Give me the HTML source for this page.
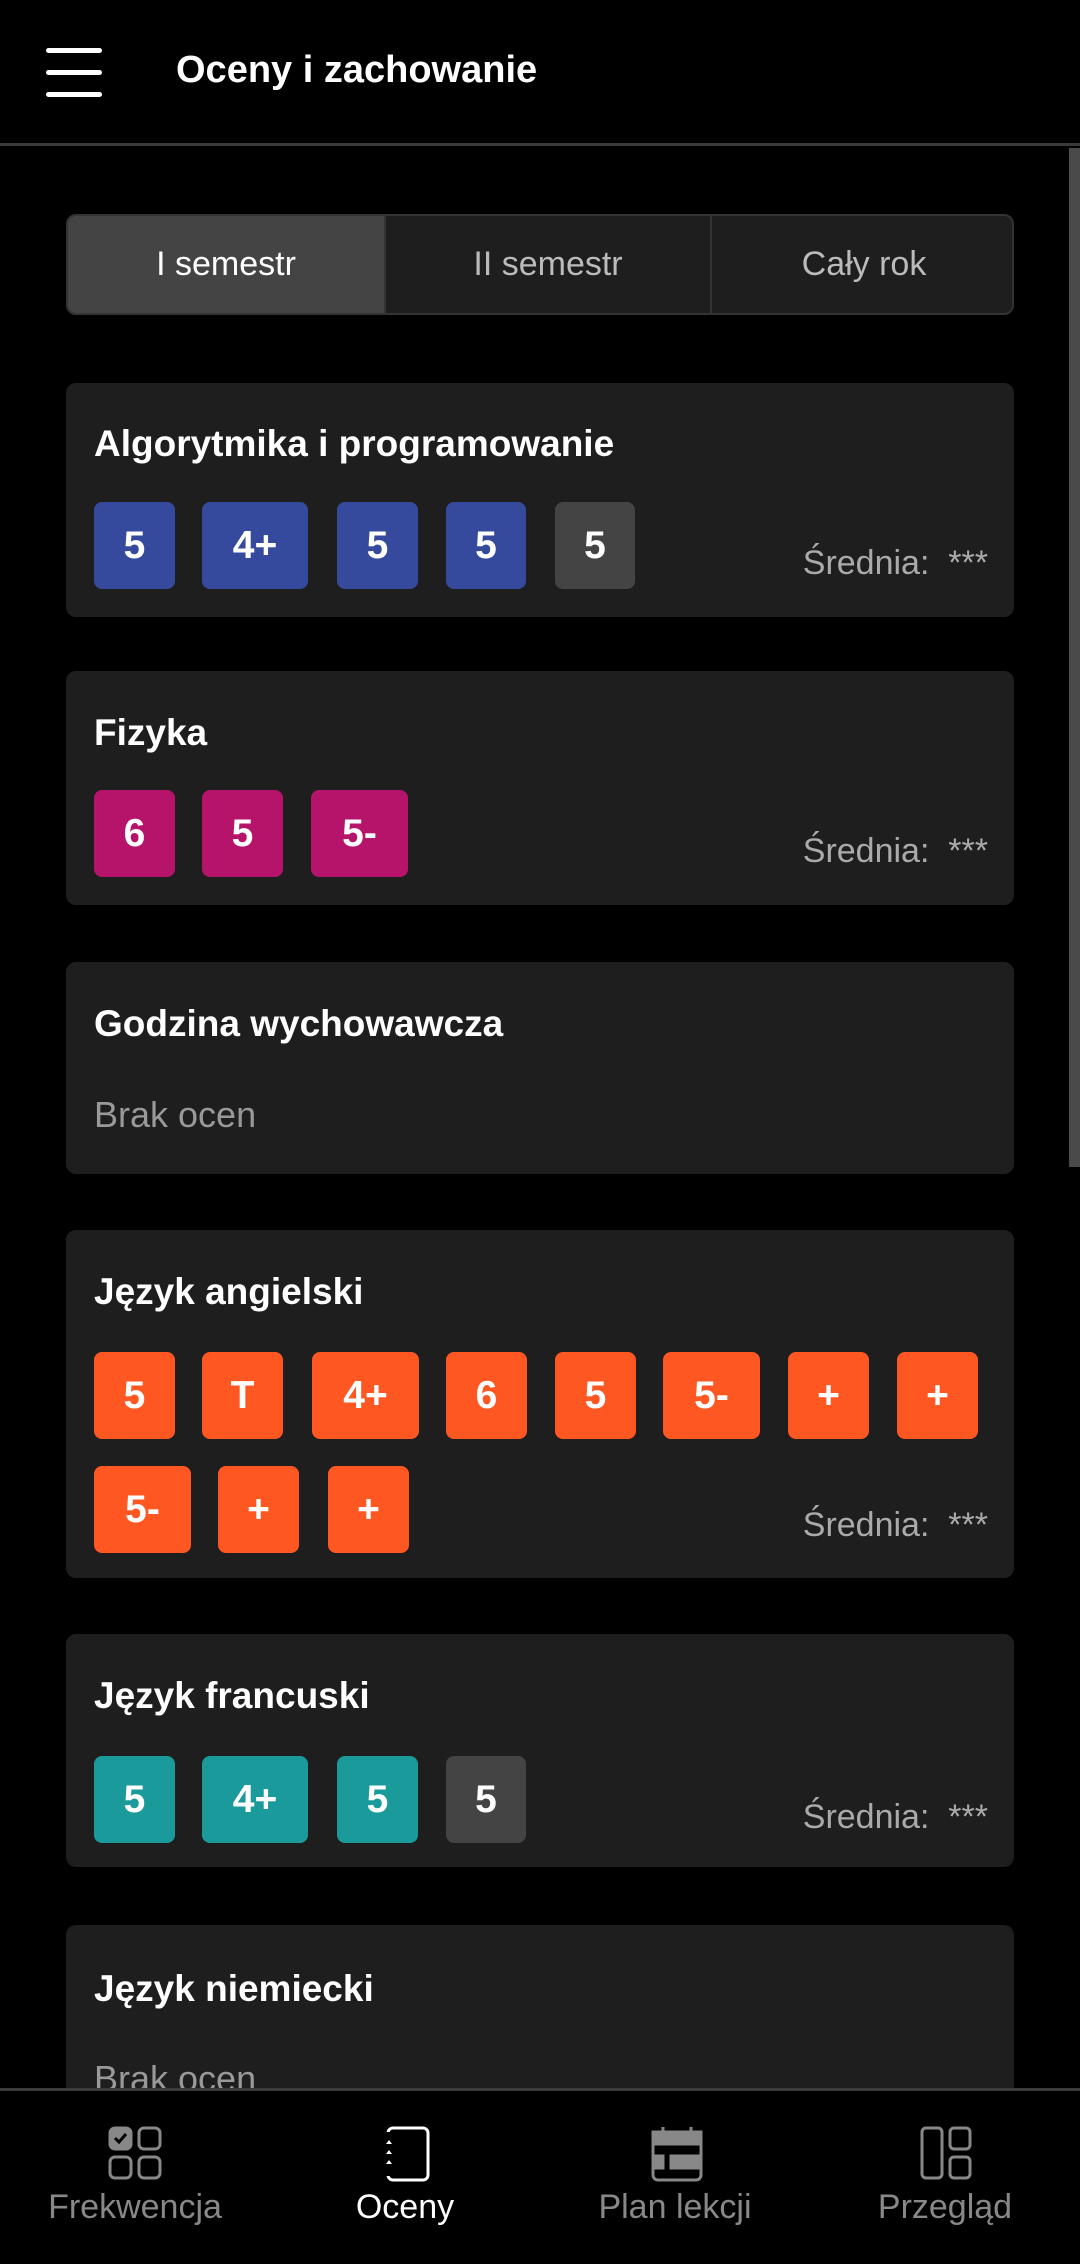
<!DOCTYPE html>
<html><head><meta charset="utf-8"><style>
*{margin:0;padding:0;box-sizing:border-box}
body{width:1080px;height:2264px;background:#000;font-family:"Liberation Sans",sans-serif;color:#fff;position:relative;overflow:hidden}
.a{position:absolute}
.hdr{left:0;top:0;width:1080px;height:146px;border-bottom:3px solid #3a3a3a}
.ham{left:46px;width:56px;height:5px;background:#fff;border-radius:3px}
.seg{left:66px;top:214px;width:948px;height:101px;background:#1e1e1e;border:2px solid #333;border-radius:10px;overflow:hidden}
.seg div{position:absolute;top:0;height:100%;display:flex;align-items:center;justify-content:center;font-size:34px;color:#bbb}
.card{left:66px;width:948px;background:#1e1e1e;border-radius:10px}
.t{position:absolute;left:28px;font-size:37px;font-weight:bold;color:#fff}
.g{position:absolute;height:87px;border-radius:8px;display:flex;align-items:center;justify-content:center;font-size:39px;font-weight:bold;color:#fff}
.b{background:#354a9c}.p{background:#b5146a}.o{background:#ff5722}.c{background:#1a9a9a}.x{background:#444}
.s{position:absolute;right:26px;font-size:34px;color:#aaa}
.br{position:absolute;left:28px;font-size:36px;color:#999}
.nav{left:0;top:2088px;width:1080px;height:176px;background:#000;border-top:3px solid #3a3a3a}
.lbl{position:absolute;top:2188px;font-size:34px;color:#888;text-align:center;width:270px}
</style></head><body>
<div class="a hdr"></div>
<div class="a ham" style="top:48px"></div><div class="a ham" style="top:70px"></div><div class="a ham" style="top:92px"></div>
<div class="a" style="left:176px;top:49px;font-size:38px;font-weight:bold">Oceny i zachowanie</div>
<div class="a" style="left:1069px;top:148px;width:11px;height:1019px;background:#4a4a4a"></div>

<div class="a seg">
<div style="left:0;width:316px;background:#444;color:#fff">I semestr</div>
<div style="left:316px;width:326px;border-left:2px solid #333">II semestr</div>
<div style="left:642px;width:306px;border-left:2px solid #333">Cały rok</div>
</div>

<div class="a card" style="top:383px;height:234px">
<div class="t" style="top:40px">Algorytmika i programowanie</div>
<div class="g b" style="left:28px;top:119px;width:81px">5</div>
<div class="g b" style="left:136px;top:119px;width:106px">4+</div>
<div class="g b" style="left:271px;top:119px;width:81px">5</div>
<div class="g b" style="left:380px;top:119px;width:80px">5</div>
<div class="g x" style="left:489px;top:119px;width:80px">5</div>
<div class="s" style="top:161px">Średnia: &nbsp;***</div>
</div>

<div class="a card" style="top:671px;height:234px">
<div class="t" style="top:41px">Fizyka</div>
<div class="g p" style="left:28px;top:119px;width:81px">6</div>
<div class="g p" style="left:136px;top:119px;width:81px">5</div>
<div class="g p" style="left:245px;top:119px;width:97px">5-</div>
<div class="s" style="top:161px">Średnia: &nbsp;***</div>
</div>

<div class="a card" style="top:962px;height:212px">
<div class="t" style="top:41px">Godzina wychowawcza</div>
<div class="br" style="top:132px">Brak ocen</div>
</div>

<div class="a card" style="top:1230px;height:348px">
<div class="t" style="top:41px">Język angielski</div>
<div class="g o" style="left:28px;top:122px;width:81px">5</div>
<div class="g o" style="left:136px;top:122px;width:81px">T</div>
<div class="g o" style="left:246px;top:122px;width:107px">4+</div>
<div class="g o" style="left:380px;top:122px;width:81px">6</div>
<div class="g o" style="left:489px;top:122px;width:81px">5</div>
<div class="g o" style="left:597px;top:122px;width:97px">5-</div>
<div class="g o" style="left:722px;top:122px;width:81px">+</div>
<div class="g o" style="left:831px;top:122px;width:81px">+</div>
<div class="g o" style="left:28px;top:236px;width:97px">5-</div>
<div class="g o" style="left:152px;top:236px;width:81px">+</div>
<div class="g o" style="left:262px;top:236px;width:81px">+</div>
<div class="s" style="top:276px">Średnia: &nbsp;***</div>
</div>

<div class="a card" style="top:1634px;height:233px">
<div class="t" style="top:41px">Język francuski</div>
<div class="g c" style="left:28px;top:122px;width:81px">5</div>
<div class="g c" style="left:136px;top:122px;width:106px">4+</div>
<div class="g c" style="left:271px;top:122px;width:81px">5</div>
<div class="g x" style="left:380px;top:122px;width:80px">5</div>
<div class="s" style="top:164px">Średnia: &nbsp;***</div>
</div>

<div class="a card" style="top:1925px;height:240px">
<div class="t" style="top:43px">Język niemiecki</div>
<div class="br" style="top:133px">Brak ocen</div>
</div>

<div class="a nav"></div>
<svg class="a" style="left:108px;top:2126px" width="54" height="54" viewBox="0 0 54 54" fill="none" stroke="#888" stroke-width="3">
<rect x="2" y="2" width="21" height="21" rx="5" fill="#888"/><path d="M7 12l4 4 7-8" stroke="#000" stroke-width="3"/>
<rect x="31" y="2" width="21" height="21" rx="5"/><rect x="2" y="31" width="21" height="21" rx="5"/><rect x="31" y="31" width="21" height="21" rx="5"/></svg>
<svg class="a" style="left:382px;top:2126px" width="50" height="56" viewBox="0 0 50 56" fill="none" stroke="#fff" stroke-width="3">
<rect x="6" y="2" width="40" height="52" rx="5"/><rect x="3" y="6" width="8" height="44" fill="#000" stroke="none"/><path d="M7 14l-3 4h6zM7 24l-3 4h6zM7 34l-3 4h6z" fill="#fff" stroke="none"/></svg>
<svg class="a" style="left:651px;top:2126px" width="52" height="56" viewBox="0 0 52 56" fill="none" stroke="#888" stroke-width="3">
<rect x="2" y="6" width="48" height="48" rx="5"/><rect x="2" y="6" width="48" height="12" fill="#888"/><path d="M12 1v8M40 1v8" /><path d="M50 30H20v12h30M2 30h10v12H2" fill="#888"/></svg>
<svg class="a" style="left:920px;top:2126px" width="52" height="54" viewBox="0 0 52 54" fill="none" stroke="#888" stroke-width="3">
<rect x="2" y="2" width="20" height="50" rx="4"/><rect x="30" y="2" width="20" height="21" rx="4"/><rect x="30" y="31" width="20" height="21" rx="4"/></svg>
<div class="lbl" style="left:0">Frekwencja</div>
<div class="lbl" style="left:270px;color:#fff">Oceny</div>
<div class="lbl" style="left:540px">Plan lekcji</div>
<div class="lbl" style="left:810px">Przegląd</div>
</body></html>
